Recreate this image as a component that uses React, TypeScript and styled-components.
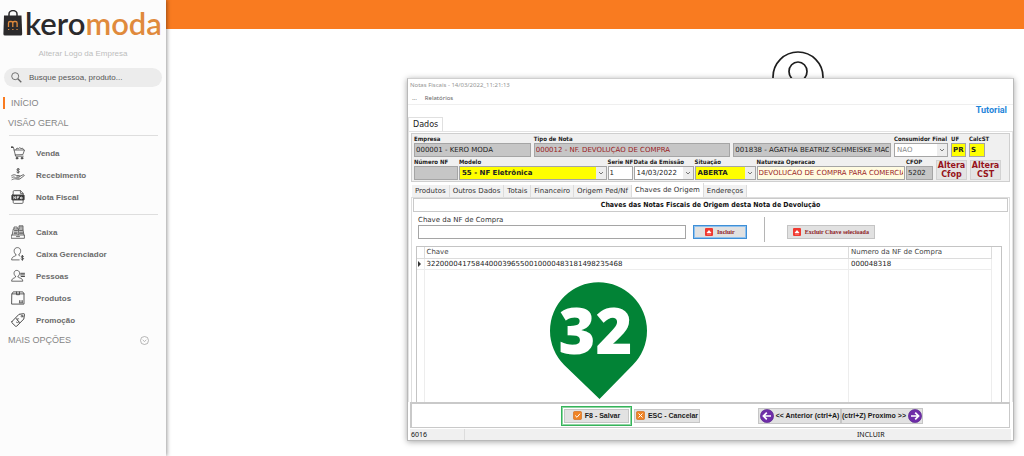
import React, { ReactNode } from 'react';
import styled, { createGlobalStyle, css } from 'styled-components';

const sans = '"Liberation Sans", Arial, sans-serif';
const verdana = '"DejaVu Sans", Verdana, sans-serif';
const tahoma = '"DejaVu Sans Condensed", "DejaVu Sans", Tahoma, sans-serif';
const segoe = '"Noto Sans", "Segoe UI", sans-serif';

const GlobalStyle = createGlobalStyle`
  *, *::before, *::after { box-sizing: border-box; }
  body { margin: 0; background: #fff; font-family: ${sans}; }
  button, input, select { margin: 0; padding: 0; font: inherit; color: inherit; border-radius: 0; }
`;

/* ---------- shell ---------- */

const Page = styled.div`
  display: flex;
  min-height: 100vh;
`;

const Sidebar = styled.aside`
  flex: none;
  width: 166px;
  background: #fcfcfc;
  box-shadow: 1px 0 4px rgba(0, 0, 0, 0.4);
  z-index: 1;
`;

const Main = styled.main`
  flex: 1;
  min-width: 0;
`;

const TopBar = styled.header`
  height: 29px;
  background: #f97b20;
`;

const Desktop = styled.div`
  padding: 22px 10px 14px 241px;
`;

const Avatar = styled.svg`
  display: block;
  margin-left: 365px;
`;

/* ---------- sidebar ---------- */

const Brand = styled.div`
  display: flex;
  align-items: flex-end;
  height: 40px;
  padding-left: 3px;
  gap: 2px;
`;

const BagIcon = styled.svg`
  flex: none;
  margin-bottom: 4px;
`;

const BrandName = styled.span`
  font: 600 31px/34px Lato, sans-serif;
  color: #2b2a2c;
  & > span { color: #e08a3c; }
`;

const LogoLink = styled.a`
  display: block;
  margin-top: 8px;
  font-size: 8px;
  line-height: 12px;
  text-align: center;
  color: #bdbdbd;
  text-decoration: none;
`;

const Search = styled.label`
  display: flex;
  align-items: center;
  gap: 7px;
  height: 19px;
  margin: 8px 4px 0;
  padding: 0 7px;
  border-radius: 10px;
  background: #ececec;
  svg { flex: none; }
  input {
    flex: 1;
    min-width: 0;
    border: 0;
    background: none;
    font-size: 8px;
    outline: 0;
  }
  input::placeholder { color: #555; opacity: 1; }
`;

const SectionLink = styled.a<{ $active?: boolean }>`
  display: flex;
  align-items: center;
  justify-content: space-between;
  height: 12px;
  margin: 8px 17px 0 ${(p) => (p.$active ? 3 : 8)}px;
  padding-left: ${(p) => (p.$active ? 6 : 0)}px;
  border-left: ${(p) => (p.$active ? '2px solid #f97b20' : '0')};
  font-size: 9px;
  color: #858585;
  text-decoration: none;
`;

const Nav = styled.nav`
  padding-top: 2px;
  ul + ${SectionLink} { margin-top: 3px; }
`;

const Menu = styled.ul`
  list-style: none;
  margin: 6px 8px 0 9px;
  padding: 6px 0 0;
  border-top: 1px solid #dedede;
`;

const MenuLink = styled.a`
  display: flex;
  align-items: center;
  gap: 11px;
  height: 22px;
  padding-left: 2px;
  font-size: 8px;
  font-weight: 700;
  color: #6b6b6b;
  text-decoration: none;
`;

/* ---------- window ---------- */

const Window = styled.section`
  display: flex;
  flex-direction: column;
  border: 1px solid #b9b9b9;
  border-top-color: #cfcfcf;
  background: #fff;
  box-shadow: 0 1px 6px rgba(0, 0, 0, 0.35);
`;

const TitleBar = styled.h1`
  margin: 0;
  padding: 0 2px;
  font: 400 6px/13px ${segoe};
  color: #949494;
`;

const MenuBar = styled.nav`
  display: flex;
  gap: 8px;
  padding: 0 4px;
  border-bottom: 1px solid #efefef;
  font: 400 6px/12px ${segoe};
  color: #666;
  a { color: inherit; text-decoration: none; }
`;

const TutorialLink = styled.a`
  align-self: flex-end;
  margin: -1px 6px 0 0;
  font: 700 9px/13px Roboto, sans-serif;
  color: #1f86da;
  text-decoration: none;
`;

const MainTab = styled.button`
  align-self: flex-start;
  height: 14px;
  padding: 0 4px;
  border: 1px solid #e0e0e0;
  border-bottom: 0;
  background: #fff;
  font: 400 8px/13px ${verdana};
  color: #222;
`;

const Frame = styled.div`
  flex: 1;
  display: flex;
  flex-direction: column;
  padding: 1px 2px 0;
  border: solid #e3e3e3;
  border-width: 1px 1px 0;
`;

const FormPanel = styled.div`
  padding: 0 2px 1px;
  border: 1px solid #cfcfcf;
  background: #f0f0f0;
`;

const FieldRow = styled.div`
  display: grid;
  grid-template-columns: 117fr 197fr 158fr 54px 15px 16px;
  column-gap: 3px;
  margin-right: 22px;
`;

const SecondRow = styled.div`
  display: flex;
  align-items: flex-end;
  gap: 3px;
  margin-right: 6px;
`;

const FieldRowDense = styled(FieldRow)`
  flex: 1;
  grid-template-columns: 44px 148fr 25px 60px 61px 149fr 27px;
  column-gap: 1px;
  margin-right: 0;
`;

type Tone = 'grey' | 'yellow' | 'cream' | 'white';
const tones: Record<Tone, string> = {
  grey: '#c6c6c6',
  yellow: '#ffff00',
  cream: '#fffbe0',
  white: '#ffffff',
};

type ControlProps = { $tone: Tone; $red?: boolean; $bold?: boolean };

const FieldBox = styled.div`
  display: flex;
  flex-direction: column;
  justify-content: flex-end;
  min-width: 0;
`;

const FieldLabel = styled.label`
  height: 9px;
  font: 700 6px/9px ${tahoma};
  color: #1c1c1c;
  white-space: nowrap;
`;

const control = css<ControlProps>`
  width: 100%;
  min-width: 0;
  height: 14px;
  padding: 0 1px;
  border: 1px solid #a5a5a5;
  background: ${(p) => tones[p.$tone]};
  font: ${(p) => (p.$bold ? 700 : 400)} 7px/12px ${verdana};
  color: ${(p) => (p.$red ? '#9a1c24' : '#222')};
`;

const TextBox = styled.input<ControlProps>`
  ${control}
`;

const SelectShell = styled.div<ControlProps & { $muted?: boolean }>`
  display: grid;
  grid-template-columns: 1fr 11px;
  align-items: center;
  select {
    ${control}
    grid-area: 1 / 1 / 2 / 3;
    appearance: none;
    padding: 0 3px 0 2px;
    ${(p) => p.$muted && 'color: #8a8a8a;'}
  }
  svg {
    grid-area: 1 / 2;
    width: 10px;
    height: 12px;
    background: #ededed;
    pointer-events: none;
  }
`;

const AlteraButton = styled.button`
  flex: none;
  width: 31px;
  height: 20px;
  border: 1px solid #d2d2d2;
  background: #e4e4e4;
  font: 700 8px/9px ${verdana};
  color: #96131b;
`;

const Tabs = styled.div`
  display: flex;
  align-items: flex-end;
  height: 15px;
  padding-left: 1px;
  background: #fff;
`;

const Tab = styled.button<{ $active?: boolean }>`
  height: ${(p) => (p.$active ? 14 : 12)}px;
  padding: 0 3px;
  border: 0;
  border-right: 1px solid #dcdcdc;
  background: ${(p) => (p.$active ? '#fff' : '#f1f1f1')};
  font: 400 7px/12px ${verdana};
  color: #333;
  white-space: nowrap;
`;

const TabPage = styled.div`
  flex: 1;
  display: flex;
  flex-direction: column;
  padding: 0 1px;
  border: solid #dedede;
  border-width: 1px 1px 0;
`;

const Banner = styled.h2`
  margin: 0;
  border: 1px solid #cacaca;
  font: 700 7px/12px ${tahoma};
  color: #111;
  text-align: center;
`;

const KeyRow = styled.div`
  display: flex;
  align-items: flex-end;
  padding: 3px 0 7px 5px;
`;

const KeyField = styled.div`
  flex: 0 1 268px;
  display: flex;
  flex-direction: column;
  label { font: 400 7px/10px ${verdana}; color: #333; }
`;

const ActionButton = styled.button<{ $focus?: boolean }>`
  display: flex;
  align-items: center;
  justify-content: center;
  gap: 4px;
  height: 14px;
  padding: 0 ${(p) => (p.$focus ? 11 : 5)}px;
  margin-left: ${(p) => (p.$focus ? 7 : 22)}px;
  border: 1px solid ${(p) => (p.$focus ? '#3f8fd6' : '#c4c4c4')};
  outline: ${(p) => (p.$focus ? '1px solid #8fc1ee' : '0')};
  outline-offset: -2px;
  background: #e1e1e1;
  font: 700 6px/10px "Liberation Serif", serif;
  color: #8d1a1f;
  white-space: nowrap;
`;

const Divider = styled.span`
  width: 1px;
  height: 25px;
  margin: 0 0 -3px 17px;
  background: #b5b5b5;
`;

const TableFrame = styled.div`
  flex: 1;
  margin: 0 6px 0 3px;
  border: 1px solid #c4c4c4;
  border-bottom: 0;
  padding-right: 9px;
  display: flex;
`;

const Table = styled.table`
  width: 100%;
  height: 155px;
  border-collapse: collapse;
  table-layout: fixed;
  font: 400 7px/10px ${verdana};
  color: #222;
  th, td {
    height: 11px;
    padding: 0 2px;
    border-right: 1px solid #ededed;
    border-bottom: 1px solid #ededed;
    font-weight: 400;
    text-align: left;
    white-space: nowrap;
  }
  th { color: #444; border-color: #dcdcdc; }
  tr > :first-child { width: 7px; padding: 0; }
  tr > :last-child { width: 143px; }
  tbody tr:last-child td { height: auto; border-bottom: 0; }
  svg { display: block; margin: 0 auto; }
`;

const CommandBar = styled.footer`
  display: flex;
  align-items: center;
  gap: 2px;
  height: 26px;
  margin: 0 3px 0 2px;
  padding: 0 86px 0 149px;
  border: solid #c9c9c9;
  border-width: 2px 1px 1px 2px;
`;

const SaveSlot = styled.div`
  position: relative;
  border: 1px solid #35b45a;
  outline: 1px solid #8fd4a2;
  outline-offset: -2px;
  padding: 2px;
`;

const CommandButton = styled.button<{ $width: number }>`
  display: flex;
  align-items: center;
  justify-content: center;
  gap: 3px;
  width: ${(p) => p.$width}px;
  height: 14px;
  border: 1px solid #c6c6c6;
  background: #e2e2e2;
  font: 700 7px/12px ${sans};
  color: #1a1a1a;
  white-space: nowrap;
  svg { flex: none; }
`;

const NavGroup = styled.div`
  display: flex;
  margin-left: auto;
  ${CommandButton} { height: 16px; gap: 2px; }
`;

const Pin = styled.div`
  position: absolute;
  left: 50%;
  bottom: 100%;
  width: 97px;
  height: 117px;
  margin: 0 0 8px -47px;
  pointer-events: none;
  display: grid;
  svg { grid-area: 1 / 1; }
  span {
    grid-area: 1 / 1;
    padding-right: 5px;
    font: 800 63px/95px "Open Sans", sans-serif;
    text-align: center;
    color: #fff;
    z-index: 1;
  }
`;

const StatusBar = styled.div`
  display: grid;
  grid-template-columns: 55px 1fr 155px;
  height: 11px;
  margin: 1px 2px 0;
  background: #f0f0f0;
  font: 400 7px/11px ${segoe};
  color: #111;
  span { padding-left: 1px; }
  span:first-child { border-right: 1px solid #dcdcdc; }
`;

/* ---------- drawings ---------- */

const Glyph = ({ children }: { children: ReactNode }) => (
  <svg width="14" height="14" viewBox="0 0 14 14" fill="none" stroke="#4a4a4a" strokeWidth="0.8" strokeLinecap="round" strokeLinejoin="round" aria-hidden="true">
    {children}
  </svg>
);

const Cart = () => (
  <Glyph>
    <path d="M0.4 1.2h2l2.2 9h7.6M3.2 4h10.3l-1.6 4.6-7.6.3M5 3.6l1-1.6 1.6.8 1-1.2 1.4 1 1.6-.4.8 1.4" />
    <path d="M0.2 1.2h1.4" strokeWidth="1.4" />
    <circle cx="6" cy="12.2" r="0.9" fill="#4a4a4a" /><circle cx="11" cy="12.2" r="0.9" fill="#4a4a4a" />
  </Glyph>
);
const HandMoney = () => (
  <Glyph>
    <path d="M8.5 1.2C7.8.5 5.800.7 5.900 1.900c.1 1.200 2.500.7 2.500 1.900 0 1.100-1.900 1.200-2.600.4M7.100.2v4.900" strokeWidth="0.9" />
    <path d="M.5 7.800c2-1.600 3.500-1.200 4.800-.3h3c1 .2.800 1.400-.2 1.400H5.800M8.900 8.300l3.300-1.600c1-.2 1.400.7.700 1.200l-4 3c-1.200.7-3 .2-4.300 0-1.300-.2-2.500.2-3.600.8M1 9.500c1.500-.9 2.300-.6 3.200 0M5 10h3" />
  </Glyph>
);
const Nfe = () => (
  <Glyph>
    <path d="M2.200 5V1.600c0-.6.300-1 1-1h6.300l2.600 2.700V5M9.400.7v2.700H12M2.200 10v2.300c0 .7.400 1.100 1 1.100h7.900c.7 0 1-.4 1-1.100V10" />
    <rect x="0.800" y="4.900" width="12.400" height="5.200" rx="0.600" fill="#333" />
    <path d="M2.800 8.800V6.400l1.800 2.400V6.400M6.200 8.800V6.400h1.700M6.300 7.600h1.300M9.300 8h2c0-1.300-2-1.300-2 0 0 1 1.200 1 1.900.6" stroke="#fff" strokeWidth="0.700" />
  </Glyph>
);
const Register = () => (
  <Glyph>
    <path d="M.6 10h12.800v3.300H.6zM1.200 9.800 2.300 4h9.600l1 5.800M3 3.800V2h3.200v1.800M8 3.800V.8h4v3.100M7.600 4.300l-.4 5.500" />
    <path d="M3.500 5.600h3M3.200 7.200h3M3 8.700h3M8.500 5.600h3M8.500 7.200h3.200M8.500 8.700h3.500M8.600 2h2.800" strokeWidth="0.900" />
    <path d="M5.500 11.600h3" />
  </Glyph>
);
const Manager = () => (
  <Glyph>
    <path d="M4.900 7.600C3.500 6.600 3 5 3.200 3.300 3.400 1.600 4.700.6 6.400.6s3 1 3.200 2.700c.2 1.700-.3 3.300-1.700 4.300M4.900 7.600c.1 1-.3 1.300-1.400 1.700C1.800 9.900.8 10.500.6 12.900h7.600M7.900 7.600c0 .7.200 1 .7 1.300" />
    <path d="M12.500 9.400c-.6-.7-2.400-.5-2.300.5.100 1 2.400.6 2.400 1.700 0 1-1.800 1.100-2.500.4M11.400 8.400v4.900" strokeWidth="1" />
  </Glyph>
);
const People = () => (
  <Glyph>
    <path d="M4.600 7.400C3.400 6.500 2.900 5.200 3.100 3.700 3.300 2.100 4.400 1.400 5.800 1.400s2.500.8 2.700 2.300c.2 1.500-.3 2.800-1.500 3.700M4.600 7.400c0 1-.5 1.200-1.500 1.600C1.500 9.600.8 10.200.6 12.200h11.200c-.2-2-1-2.600-2.800-3.200-1.300-.4-2-.6-2-1.600" />
    <path d="M9.600 4.300h3.900M9.600 5.900h3.900M10.200 7.500h3.300" strokeWidth="1" />
  </Glyph>
);
const Box = () => (
  <Glyph>
    <path d="M1 2.800 2.200.9h9.600L13 2.800v10.300H1zM1 2.900h12M5.500 1v2.700h3V1" strokeWidth="0.900" />
    <path d="M8.500 9.600v1.800M10 9.600v1.800M11.400 9.600v1.800M8.300 11.900h3.300" />
  </Glyph>
);
const Tag = () => (
  <Glyph>
    <path d="M.9 8.600 8 1.300l4.800-.6c.5 0 .7.200.7.700L12.800 6l-7.100 7.200c-.5.400-.8.400-1.200 0L.9 9.700c-.4-.4-.4-.7 0-1.100z" strokeWidth="1" />
    <circle cx="11" cy="3.200" r="0.900" />
    <path d="M7.800 5.800c-1-.7-2.200.3-1.700 1.200.5.800 1.600.7 1.700 1.600.100 1-1.500 1.500-2.500.500M5 5.200l3.500 4.500" />
  </Glyph>
);

const Chevron = () => (
  <svg viewBox="0 0 10 12" fill="none" stroke="#777" aria-hidden="true"><path d="M3 5l2 2 2-2" /></svg>
);

const RedMark = () => (
  <svg width="8" height="8" viewBox="0 0 8 8" aria-hidden="true">
    <rect width="8" height="8" rx="1" fill="#f0382f" />
    <path d="M1.500 5 4 2l2.500 3z" fill="#fff" /><path d="M2 6h4" stroke="#ffb9b3" strokeWidth="0.700" />
  </svg>
);

const OrangeMark = ({ d }: { d: string }) => (
  <svg width="9" height="9" viewBox="0 0 9 9" aria-hidden="true">
    <rect x="0.500" y="0.500" width="8" height="8" rx="1" fill="#f08324" stroke="#cf6410" strokeWidth="0.600" />
    <path d={d} stroke="#fff" strokeWidth="1" fill="none" />
  </svg>
);

const PurpleArrow = ({ flip }: { flip?: boolean }) => (
  <svg width="14" height="14" viewBox="0 0 14 14" aria-hidden="true">
    <circle cx="7" cy="7" r="6.600" fill="#6f2da8" stroke="#52208a" strokeWidth="0.600" />
    <path d={flip ? 'M3 7h7.500M7.200 3.600 10.600 7l-3.400 3.400' : 'M11 7H3.500M6.800 3.600 3.400 7l3.400 3.400'} stroke="#fff" strokeWidth="1.700" fill="none" />
  </svg>
);

/* ---------- form helpers ---------- */

type FieldProps = {
  id: string;
  label: string;
  value: string;
  tone?: Tone;
  red?: boolean;
  bold?: boolean;
  hideLabel?: boolean;
};

const Field = ({ id, label, value, tone = 'grey', red, bold, hideLabel }: FieldProps) => (
  <FieldBox>
    {!hideLabel && <FieldLabel htmlFor={id}>{label}</FieldLabel>}
    <TextBox id={id} aria-label={hideLabel ? label : undefined} defaultValue={value} $tone={tone} $red={red} $bold={bold} />
  </FieldBox>
);

const SelectField = ({ id, label, value, tone = 'white', bold, muted }: FieldProps & { muted?: boolean }) => (
  <FieldBox>
    <FieldLabel htmlFor={id}>{label}</FieldLabel>
    <SelectShell $tone={tone} $muted={muted} $bold={bold}>
      <select id={id} defaultValue={value}><option>{value}</option></select>
      <Chevron />
    </SelectShell>
  </FieldBox>
);

const salesMenu = [
  { label: 'Venda', icon: <Cart /> },
  { label: 'Recebimento', icon: <HandMoney /> },
  { label: 'Nota Fiscal', icon: <Nfe /> },
];

const officeMenu = [
  { label: 'Caixa', icon: <Register /> },
  { label: 'Caixa Gerenciador', icon: <Manager /> },
  { label: 'Pessoas', icon: <People /> },
  { label: 'Produtos', icon: <Box /> },
  { label: 'Promoção', icon: <Tag /> },
];

const tabs = ['Produtos', 'Outros Dados', 'Totais', 'Financeiro', 'Origem Ped/Nf', 'Chaves de Origem', 'Endereços'];

const MenuList = ({ items }: { items: { label: string; icon: ReactNode }[] }) => (
  <Menu>
    {items.map((item) => (
      <li key={item.label}><MenuLink href="#">{item.icon}{item.label}</MenuLink></li>
    ))}
  </Menu>
);

export default function App() {
  return (
    <Page>
      <GlobalStyle />
      <Sidebar>
        <Brand>
          <BagIcon width="20" height="26" viewBox="0 0 20 26" aria-hidden="true">
            <path d="M6 7V4a4 3.400 0 0 1 8 0v3" fill="none" stroke="#2b2a2c" strokeWidth="1.500" />
            <path d="M1 5.500h17.500l.7 18.500q0 1.500-1.500 1.500H2Q.4 25.500.4 24z" fill="#2b2a2c" />
            <path d="M5.500 17v-4q0-1.500 1.500-1.500h1.300q1.500 0 1.500 1.500v4M9.800 13q0-1.500 1.500-1.500h1.300q1.500 0 1.500 1.500v4" fill="none" stroke="#e08a3c" strokeWidth="1.300" />
            <path d="M5 19.500h1.300M9.200 19.500h1.300M13.400 19.500h1.300" stroke="#e08a3c" />
          </BagIcon>
          <BrandName>kero<span>moda</span></BrandName>
        </Brand>
        <LogoLink href="#">Alterar Logo da Empresa</LogoLink>
        <Search>
          <svg width="11" height="11" viewBox="0 0 11 11" fill="none" stroke="#666" aria-hidden="true">
            <circle cx="4.200" cy="4.200" r="3.500" strokeWidth="0.900" /><path d="M6.800 6.800l3.500 3.500" strokeWidth="1.300" />
          </svg>
          <input type="search" placeholder="Busque pessoa, produto..." aria-label="Busque pessoa, produto" />
        </Search>
        <Nav>
          <SectionLink href="#" $active>INÍCIO</SectionLink>
          <SectionLink href="#">VISÃO GERAL</SectionLink>
          <MenuList items={salesMenu} />
          <MenuList items={officeMenu} />
          <SectionLink href="#">
            MAIS OPÇÕES
            <svg width="9" height="9" viewBox="0 0 9 9" fill="none" stroke="#999" strokeWidth="0.700" aria-hidden="true">
              <circle cx="4.500" cy="4.500" r="4" /><path d="M2.700 3.900l1.800 1.600 1.800-1.600" />
            </svg>
          </SectionLink>
        </Nav>
      </Sidebar>
      <Main>
        <TopBar />
        <Desktop>
          <Avatar width="52" height="27" viewBox="0 0 52 27" fill="none" stroke="#1d1d1d" strokeWidth="1.700" aria-hidden="true">
            <circle cx="26" cy="26" r="25" /><ellipse cx="26" cy="20.500" rx="9" ry="9.500" />
          </Avatar>
          <Window>
            <TitleBar>Notas Fiscais - 14/03/2022_11:21:13</TitleBar>
            <MenuBar><a href="#">...</a><a href="#">Relatórios</a></MenuBar>
            <TutorialLink href="#">Tutorial</TutorialLink>
            <MainTab type="button">Dados</MainTab>
            <Frame>
              <FormPanel>
                <FieldRow>
                  <Field id="empresa" label="Empresa" value="000001 - KERO MODA" />
                  <Field id="tipo" label="Tipo de Nota" value="000012 - NF. DEVOLUÇÃO DE COMPRA" red />
                  <Field id="pessoa" label="Pessoa" value="001838 - AGATHA BEATRIZ SCHMEISKE MACHADO" hideLabel />
                  <SelectField id="consumidor" label="Consumidor Final" value="NAO" muted />
                  <Field id="uf" label="UF" value="PR" tone="yellow" bold />
                  <Field id="calcst" label="CalcST" value="S" tone="yellow" bold />
                </FieldRow>
                <SecondRow>
                  <FieldRowDense>
                    <Field id="numero" label="Número NF" value="" />
                    <SelectField id="modelo" label="Modelo" value="55 - NF Eletrônica" tone="yellow" bold />
                    <Field id="serie" label="Serie NF" value="1" tone="white" />
                    <SelectField id="data" label="Data da Emissão" value="14/03/2022" />
                    <SelectField id="situacao" label="Situação" value="ABERTA" tone="yellow" bold />
                    <Field id="natureza" label="Natureza Operacao" value="DEVOLUCAO DE COMPRA PARA COMERCIALIZACAO" tone="cream" red />
                    <Field id="cfop" label="CFOP" value="5202" />
                  </FieldRowDense>
                  <AlteraButton type="button">Altera Cfop</AlteraButton>
                  <AlteraButton type="button">Altera CST</AlteraButton>
                </SecondRow>
              </FormPanel>
              <Tabs>
                {tabs.map((t) => <Tab key={t} type="button" $active={t === 'Chaves de Origem'}>{t}</Tab>)}
              </Tabs>
              <TabPage>
                <Banner>Chaves das Notas Fiscais de Origem desta Nota de Devolução</Banner>
                <KeyRow>
                  <KeyField>
                    <label htmlFor="chave">Chave da NF de Compra</label>
                    <TextBox id="chave" $tone="white" />
                  </KeyField>
                  <ActionButton type="button" $focus><RedMark />Incluir</ActionButton>
                  <Divider />
                  <ActionButton type="button"><RedMark />Excluir Chave selecioada</ActionButton>
                </KeyRow>
                <TableFrame>
                  <Table>
                    <thead><tr><th /><th>Chave</th><th>Numero da NF de Compra</th></tr></thead>
                    <tbody>
                      <tr>
                        <td><svg width="4" height="6" viewBox="0 0 4 6" aria-hidden="true"><path d="M0 0l3 3-3 3z" fill="#333" /></svg></td>
                        <td>32200004175844000396550010000483181498235468</td>
                        <td>000048318</td>
                      </tr>
                      <tr><td /><td /><td /></tr>
                    </tbody>
                  </Table>
                </TableFrame>
              </TabPage>
            </Frame>
            <CommandBar>
              <SaveSlot>
                <Pin>
                  <svg width="97" height="117" viewBox="0 0 97 117" aria-hidden="true">
                    <path d="M14.200 83A48.500 48.500 0 1 1 82.800 83L49.500 117z" fill="#028336" />
                  </svg>
                  <span>32</span>
                </Pin>
                <CommandButton type="button" $width={65}><OrangeMark d="M2.200 4.500 4 6.300l3-3.600" />F8 - Salvar</CommandButton>
              </SaveSlot>
              <CommandButton type="button" $width={66}><OrangeMark d="M2.500 2.500l4 4M6.500 2.500l-4 4" />ESC - Cancelar</CommandButton>
              <NavGroup>
                <CommandButton type="button" $width={83}><PurpleArrow />&lt;&lt; Anterior (ctrl+A)</CommandButton>
                <CommandButton type="button" $width={82}>(ctrl+Z) Proximo &gt;&gt;<PurpleArrow flip /></CommandButton>
              </NavGroup>
            </CommandBar>
            <StatusBar><span>6016</span><span /><span>INCLUIR</span></StatusBar>
          </Window>
        </Desktop>
      </Main>
    </Page>
  );
}
